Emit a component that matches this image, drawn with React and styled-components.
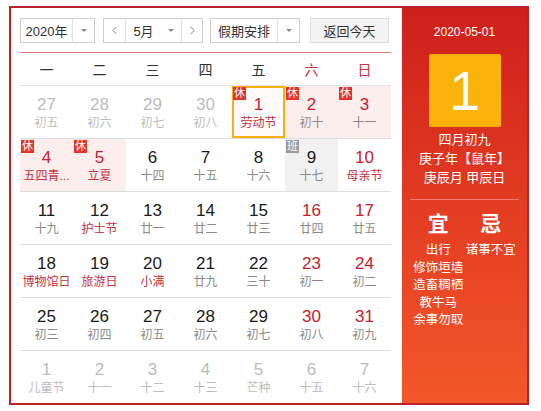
import React from 'react'
import styled, { createGlobalStyle } from 'styled-components'
import { ChevronLeft, ChevronRight } from 'lucide-react'

const GlobalStyle = createGlobalStyle`
  body {
    margin: 0;
    padding: 6px 0 0 9px;
    background: #fff;
    font-family: 'Liberation Sans', 'Noto Sans CJK SC', sans-serif;
  }
`

const Frame = styled.div`
  display: flex;
  width: 516px;
  border: 2px solid #b8232b;
`

const Main = styled.div`
  width: 371px;
  padding: 10px 11px 0 9px;
`

const Toolbar = styled.div`
  display: flex;
  align-items: center;
  height: 25px;
  padding-bottom: 9px;
  border-bottom: 1px solid #e07a7a;
`

const Select = styled.div`
  display: flex;
  height: 23px;
  width: ${(p) => p.$w}px;
  margin-right: ${(p) => p.$mr || 0}px;
  border: 1px solid #cfcfcf;
  background: #fff;
  font-size: 13px;
  color: #333;
`

const SelectText = styled.div`
  flex: 1;
  display: flex;
  align-items: center;
  justify-content: center;
`

const ArrowBox = styled.div`
  width: ${(p) => p.$w || 21}px;
  display: flex;
  align-items: center;
  justify-content: center;
  border-left: ${(p) => (p.$noline ? 'none' : '1px solid #e2e2e2')};
  &::after {
    content: '';
    border-left: 3px solid transparent;
    border-right: 3px solid transparent;
    border-top: 3px solid #8a8a8a;
  }
`

const NavBtn = styled.div`
  width: ${(p) => p.$w}px;
  display: flex;
  align-items: center;
  justify-content: center;
  border-left: ${(p) => (p.$line ? '1px solid #e2e2e2' : 'none')};
  border-right: ${(p) => (p.$rline ? '1px solid #e2e2e2' : 'none')};
  color: #666;
`

const TodayBtn = styled.div`
  width: 77px;
  height: 23px;
  display: flex;
  align-items: center;
  justify-content: center;
  border: 1px solid #dedede;
  background: #f3f3f3;
  font-size: 13px;
  color: #333;
`

const WeekRow = styled.div`
  display: grid;
  grid-template-columns: repeat(7, 53px);
  height: 32px;
  border-bottom: 1px solid #e3e3e3;
`

const WeekDay = styled.div`
  display: flex;
  align-items: center;
  justify-content: center;
  font-size: 14px;
  color: ${(p) => (p.$red ? '#c8323c' : '#333')};
`

const Row = styled.div`
  display: grid;
  grid-template-columns: repeat(7, 53px);
  height: 52px;
  border-bottom: ${(p) => (p.$last ? 'none' : '1px solid #dedede')};
`

const Cell = styled.div`
  position: relative;
  box-sizing: border-box;
  display: flex;
  flex-direction: column;
  align-items: center;
  padding-top: ${(p) => (p.$selected ? 7 : 9)}px;
  border: ${(p) => (p.$selected ? '2px solid #f3b112' : 'none')};
  background: ${(p) =>
    p.$selected ? '#fffafa' : p.$bg === 'rest' ? '#fdeeee' : p.$bg === 'work' ? '#f1f1f1' : 'transparent'};
`

const DayNum = styled.div`
  font-size: 17px;
  line-height: 20px;
  color: ${(p) => (p.$dim ? '#bcbcbc' : p.$red ? '#c8202f' : '#1a1a1a')};
`

const Lunar = styled.div`
  font-size: 12px;
  line-height: 16px;
  color: ${(p) => (p.$dim ? '#bdbdbd' : p.$red ? '#c8323c' : '#8a8a8a')};
`

const Badge = styled.span`
  position: absolute;
  top: ${(p) => (p.$offset ? -1 : 1)}px;
  left: ${(p) => (p.$offset ? -1 : 1)}px;
  width: 13px;
  height: 13px;
  display: flex;
  align-items: center;
  justify-content: center;
  font-size: 11px;
  line-height: 13px;
  color: #fff;
  background: ${(p) => (p.$work ? '#9a9a9a' : '#e3342c')};
`

const Panel = styled.div`
  width: 125px;
  padding: 16px 10px 0 10px;
  box-sizing: border-box;
  display: flex;
  flex-direction: column;
  align-items: center;
  background: linear-gradient(180deg, #cf1f1b 0%, #e23c22 50%, #f4572a 100%);
  color: #fff;
`

const PanelDate = styled.div`
  font-size: 12px;
  line-height: 16px;
`

const BigDay = styled.div`
  margin-top: 14px;
  width: 72px;
  height: 73px;
  border-radius: 2px;
  background: #fbb30c;
  display: flex;
  align-items: center;
  justify-content: center;
  font-size: 56px;
  color: #fff;
`

const LunarInfo = styled.div`
  margin-top: 3px;
  font-size: 13px;
  line-height: 19px;
  text-align: center;
  white-space: nowrap;
`

const Divider = styled.div`
  align-self: stretch;
  margin: 12px -2px 0;
  border-top: 1px solid rgba(255, 255, 255, 0.35);
`

const Almanac = styled.div`
  align-self: stretch;
  display: grid;
  grid-template-columns: 1fr 1fr;
  margin-top: 11px;
`

const AlmanacCol = styled.div`
  display: flex;
  flex-direction: column;
  align-items: center;
`

const AlmanacHead = styled.div`
  font-size: 21px;
  font-weight: bold;
  line-height: 26px;
  margin-bottom: 5px;
`

const AlmanacItem = styled.div`
  font-size: 12.5px;
  line-height: 17.5px;
  white-space: nowrap;
`

const weeks = [
  [
    { d: 27, l: '初五', dim: true },
    { d: 28, l: '初六', dim: true },
    { d: 29, l: '初七', dim: true },
    { d: 30, l: '初八', dim: true },
    { d: 1, l: '劳动节', red: true, lred: true, badge: 'rest', selected: true },
    { d: 2, l: '初十', red: true, badge: 'rest' },
    { d: 3, l: '十一', red: true, badge: 'rest' },
  ],
  [
    { d: 4, l: '五四青...', red: true, lred: true, badge: 'rest' },
    { d: 5, l: '立夏', red: true, lred: true, badge: 'rest' },
    { d: 6, l: '十四' },
    { d: 7, l: '十五' },
    { d: 8, l: '十六' },
    { d: 9, l: '十七', badge: 'work' },
    { d: 10, l: '母亲节', red: true, lred: true },
  ],
  [
    { d: 11, l: '十九' },
    { d: 12, l: '护士节', lred: true },
    { d: 13, l: '廿一' },
    { d: 14, l: '廿二' },
    { d: 15, l: '廿三' },
    { d: 16, l: '廿四', red: true },
    { d: 17, l: '廿五', red: true },
  ],
  [
    { d: 18, l: '博物馆日', lred: true },
    { d: 19, l: '旅游日', lred: true },
    { d: 20, l: '小满', lred: true },
    { d: 21, l: '廿九' },
    { d: 22, l: '三十' },
    { d: 23, l: '初一', red: true },
    { d: 24, l: '初二', red: true },
  ],
  [
    { d: 25, l: '初三' },
    { d: 26, l: '初四' },
    { d: 27, l: '初五' },
    { d: 28, l: '初六' },
    { d: 29, l: '初七' },
    { d: 30, l: '初八', red: true },
    { d: 31, l: '初九', red: true },
  ],
  [
    { d: 1, l: '儿童节', dim: true },
    { d: 2, l: '十一', dim: true },
    { d: 3, l: '十二', dim: true },
    { d: 4, l: '十三', dim: true },
    { d: 5, l: '芒种', dim: true },
    { d: 6, l: '十五', dim: true },
    { d: 7, l: '十六', dim: true },
  ],
]

const weekNames = ['一', '二', '三', '四', '五', '六', '日']

function App() {
  return (
    <>
      <GlobalStyle />
      <Frame>
        <Main>
          <Toolbar>
            <Select $w={73} $mr={8}>
              <SelectText>2020年</SelectText>
              <ArrowBox />
            </Select>
            <Select $w={98} $mr={7}>
              <NavBtn $w={21} $rline>
                <ChevronLeft size={13} strokeWidth={1.5} />
              </NavBtn>
              <SelectText>5月</SelectText>
              <ArrowBox $w={20} $noline />
              <NavBtn $w={20} $line>
                <ChevronRight size={13} strokeWidth={1.5} />
              </NavBtn>
            </Select>
            <Select $w={88} $mr={10}>
              <SelectText>假期安排</SelectText>
              <ArrowBox />
            </Select>
            <TodayBtn>返回今天</TodayBtn>
          </Toolbar>

          <WeekRow>
            {weekNames.map((w, i) => (
              <WeekDay key={w} $red={i > 4}>
                {w}
              </WeekDay>
            ))}
          </WeekRow>

          {weeks.map((week, wi) => (
            <Row key={wi} $last={wi === weeks.length - 1}>
              {week.map((c, ci) => (
                <Cell key={ci} $selected={c.selected} $bg={c.badge}>
                  {c.badge && (
                    <Badge $work={c.badge === 'work'} $offset={c.selected}>
                      {c.badge === 'work' ? '班' : '休'}
                    </Badge>
                  )}
                  <DayNum $dim={c.dim} $red={c.red}>
                    {c.d}
                  </DayNum>
                  <Lunar $dim={c.dim} $red={c.lred}>
                    {c.l}
                  </Lunar>
                </Cell>
              ))}
            </Row>
          ))}
        </Main>

        <Panel>
          <PanelDate>2020-05-01</PanelDate>
          <BigDay>1</BigDay>
          <LunarInfo>
            四月初九
            <br />
            庚子年【鼠年】
            <br />
            庚辰月 甲辰日
          </LunarInfo>
          <Divider />
          <Almanac>
            <AlmanacCol>
              <AlmanacHead>宜</AlmanacHead>
              <AlmanacItem>出行</AlmanacItem>
              <AlmanacItem>修饰垣墙</AlmanacItem>
              <AlmanacItem>造畜稠栖</AlmanacItem>
              <AlmanacItem>教牛马</AlmanacItem>
              <AlmanacItem>余事勿取</AlmanacItem>
            </AlmanacCol>
            <AlmanacCol>
              <AlmanacHead>忌</AlmanacHead>
              <AlmanacItem>诸事不宜</AlmanacItem>
            </AlmanacCol>
          </Almanac>
        </Panel>
      </Frame>
    </>
  )
}

export default App
